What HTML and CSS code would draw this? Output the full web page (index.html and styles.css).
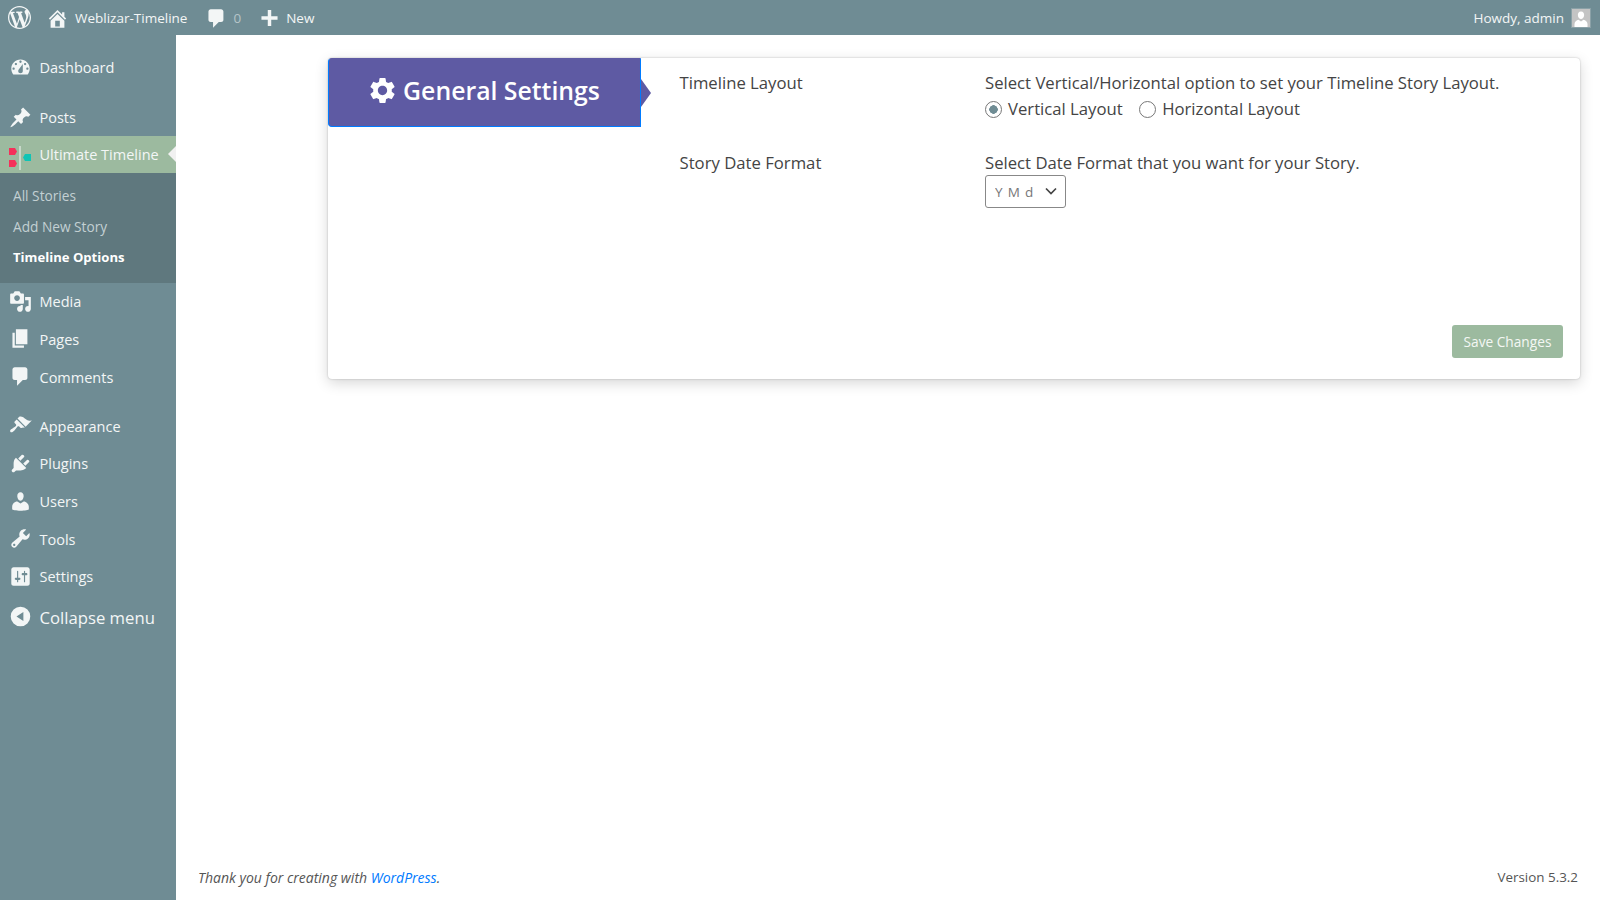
FILE: index.html
```html
<!DOCTYPE html>
<html lang="en">
<head>
    <meta charset="UTF-8" />
    <title>Timeline Options</title>
    <link rel="stylesheet" href="styles.css">
</head>
<body>
    <header class="adminbar">
        <a class="bar-item bar-logo"><svg class="bar-wp" viewBox="0 0 20 20"><path d="M20 10c0-5.51-4.49-10-10-10C4.48 0 0 4.49 0 10c0 5.52 4.48 10 10 10 5.51 0 10-4.48 10-10zM7.78 15.37L4.37 6.22c.55-.02 1.17-.08 1.17-.08.5-.06.44-1.13-.06-1.11 0 0-1.45.11-2.37.11-.18 0-.37 0-.58-.01C4.12 2.69 6.87 1.11 10 1.11c2.33 0 4.45.87 6.05 2.34-.68-.11-1.65.39-1.65 1.58 0 .74.45 1.36.9 2.1.35.61.55 1.36.55 2.46 0 1.49-1.4 5-1.4 5l-3.03-8.37c.54-.02.82-.17.82-.17.5-.05.44-1.25-.06-1.22 0 0-1.44.12-2.38.12-.87 0-2.33-.12-2.33-.12-.5-.03-.56 1.2-.06 1.22l.92.08 1.26 3.41zM17.41 10c.24-.64.74-1.87.43-4.25.7 1.29 1.05 2.71 1.05 4.25 0 3.29-1.73 6.24-4.4 7.78.97-2.59 1.94-5.2 2.92-7.78zM6.1 18.09C3.12 16.65 1.11 13.53 1.11 10c0-1.3.23-2.48.72-3.59C3.25 10.3 4.67 14.2 6.1 18.09zm4.03-6.63l2.58 6.98c-.86.29-1.76.45-2.71.45-.79 0-1.57-.11-2.29-.33.81-2.38 1.62-4.72 2.42-7.1z"/></svg></a>
        <a class="bar-item bar-site"><svg class="bar-icon" viewBox="0 0 20 20"><path d="M16 8.5l1.53 1.53-1.06 1.06L10 4.62l-6.47 6.47-1.06-1.06L10 2.5l4 4v-2h2v4zm-6-2.46l6 5.99V18H4v-5.97zM12 17v-5H8v5h4z"/></svg>Weblizar-Timeline</a>
        <a class="bar-item bar-comments"><svg class="bar-icon" viewBox="0 0 20 20"><path d="M5 2h9c1.1 0 2 .9 2 2v7c0 1.1-.9 2-2 2h-2l-5 5v-5H5c-1.1 0-2-.9-2-2V4c0-1.1.9-2 2-2z"/></svg><span class="bar-count">0</span></a>
        <a class="bar-item bar-new"><svg class="bar-icon" viewBox="0 0 20 20"><path d="M17 8v3h-5.500v5.500h-3V11H3V8h5.500V2.500h3V8z"/></svg>New</a>
        <a class="bar-item bar-user">Howdy, admin<span class="avatar"><svg viewBox="0 0 18 18"><path d="M9 2.500c-2.300 0-3.400 2-3.100 4.100.3 2.100 1.500 3.500 3.100 3.500s2.800-1.400 3.100-3.500C12.400 4.500 11.300 2.500 9 2.500zM6.500 10.800C4.500 11.300 2.500 12.800 2.500 15v3h13v-3c0-2.200-2-3.700-4-4.200L9 12.500z"/></svg></span></a>
    </header>
    <div class="page">
        <aside class="sidebar">
            <ul class="menu">
                <li class="menu-item gap-dash"><svg class="menu-icon" viewBox="0 0 20 20"><path fill-rule="evenodd" d="M3.760 16h12.480c1.100-1.370 1.760-3.110 1.760-5 0-4.420-3.580-8-8-8s-8 3.580-8 8c0 1.890.660 3.630 1.760 5zM10 4c.55 0 1 .45 1 1s-.45 1-1 1-1-.45-1-1 .45-1 1-1zM6 6c.55 0 1 .45 1 1s-.45 1-1 1-1-.45-1-1 .45-1 1-1zm8 0c.55 0 1 .45 1 1s-.45 1-1 1-1-.45-1-1 .45-1 1-1zm-5.370 5.550L12 7v6c0 1.100-.9 2-2 2s-2-.9-2-2c0-.57.240-1.080.63-1.450zM4 10c.55 0 1 .45 1 1s-.45 1-1 1-1-.45-1-1 .45-1 1-1zm12 0c.55 0 1 .45 1 1s-.45 1-1 1-1-.45-1-1 .45-1 1-1z"/></svg>Dashboard</li>
                <li class="menu-item gap-posts"><svg class="menu-icon" viewBox="0 0 20 20"><path d="M10.440 3.020l1.820-1.820 6.360 6.350-1.830 1.820c-1.050-.68-2.480-.57-3.410.36l-.75.75c-.92.93-1.040 2.350-.35 3.410l-1.830 1.820-2.410-2.410-2.800 2.790c-.42.42-3.380 2.710-3.800 2.290s1.860-3.390 2.280-3.810l2.790-2.790L4.100 9.360l1.830-1.820c1.050.69 2.480.57 3.400-.36l.75-.75c.93-.92 1.050-2.350.36-3.410z"/></svg>Posts</li>
                <li class="menu-item menu-current">
                    <svg class="menu-icon" viewBox="0 0 22 24">
                        <polygon points="0,2 6,2 8,5.500 6,9 0,9" fill="#f5305a"/>
                        <polygon points="0,14 6,14 8,17.500 6,21 0,21" fill="#f5305a"/>
                        <rect x="10.500" y="0" width="1" height="24" fill="#f3f6f6"/>
                        <polygon points="16,8 22,8 22,15 16,15 14,11.500" fill="#0fc4b5"/>
                    </svg>
                    Ultimate Timeline
                </li>
                <li class="submenu">
                    <a class="sub-item">All Stories</a>
                    <a class="sub-item">Add New Story</a>
                    <a class="sub-item sub-current">Timeline Options</a>
                </li>
                <li class="menu-item"><svg class="menu-icon" viewBox="0 0 20 20"><path d="M13 11V4c0-.55-.45-1-1-1h-1.670L9 1H5L3.670 3H2c-.55 0-1 .45-1 1v7c0 .55.45 1 1 1h10c.55 0 1-.45 1-1zM7 4.500c1.380 0 2.500 1.120 2.500 2.500S8.380 9.500 7 9.500 4.500 8.380 4.500 7 5.620 4.500 7 4.500zM14 6h5v10.500c0 1.380-1.120 2.500-2.500 2.500S14 17.880 14 16.500s1.120-2.500 2.500-2.500c.17 0 .34.02.5.05V9h-3V6zm-4 8.050V13h2v3.500c0 1.380-1.120 2.500-2.500 2.500S7 17.880 7 16.500 8.120 14 9.500 14c.17 0 .34.02.5.05z"/></svg>Media</li>
                <li class="menu-item"><svg class="menu-icon" viewBox="0 0 20 20"><path d="M6 15V2h10v13H6zm-1 1h8v2H3V5h2v11z"/></svg>Pages</li>
                <li class="menu-item gap-comments"><svg class="menu-icon" viewBox="0 0 20 20"><path d="M5 2h9c1.100 0 2 .9 2 2v7c0 1.100-.9 2-2 2h-2l-5 5v-5H5c-1.100 0-2-.9-2-2V4c0-1.100.9-2 2-2z"/></svg>Comments</li>
                <li class="menu-item"><svg class="menu-icon" viewBox="0 0 20 20"><path d="M14.480 11.060L7.410 3.990l1.500-1.500c.5-.56 2.300-.47 3.510.32 1.210.8 1.430 1.280 2.910 2.100 1.180.64 2.450 1.260 4.450.85zm-.71.71L6.700 4.700 4.930 6.470c-.39.39-.39 1.020 0 1.410l1.060 1.060c.39.39.39 1.030 0 1.420-.6.6-1.430 1.110-2.210 1.690-.35.260-.7.53-1.010.84C1.430 13.230.4 14.670 1.270 15.570c.9.870 2.330-.16 3.660-1.500.31-.31.58-.66.84-1.010.58-.78 1.090-1.610 1.690-2.210.39-.39 1.020-.39 1.410 0l1.060 1.060c.39.39 1.020.39 1.410 0z"/></svg>Appearance</li>
                <li class="menu-item"><svg class="menu-icon" viewBox="0 0 20 20"><path d="M13.110 4.360L9.870 7.600 8 5.730l3.240-3.240c.35-.34 1.050-.2 1.560.32.52.51.66 1.210.31 1.550zm-8 1.770l.91-1.120 9.010 9.010-1.190.84c-.71.71-2.630 1.160-3.820 1.160H6.140L4.900 17.260c-.59.59-1.540.59-2.120 0-.59-.58-.59-1.530 0-2.120l1.240-1.240v-3.880c0-1.130.4-3.190 1.090-3.890zm7.260 3.970l3.240-3.240c.34-.35 1.040-.21 1.550.31.52.51.66 1.210.31 1.550l-3.240 3.250z"/></svg>Plugins</li>
                <li class="menu-item"><svg class="menu-icon" viewBox="0 0 20 20"><path d="M10 9.250c-2.270 0-2.730-3.440-2.730-3.440C7 4.020 7.820 2 9.970 2c2.160 0 2.980 2.020 2.710 3.810 0 0-.41 3.440-2.680 3.440zm0 2.570L12.720 10c2.390 0 4.520 2.330 4.520 4.530v2.490s-3.650 1.130-7.240 1.130c-3.650 0-7.240-1.130-7.240-1.130v-2.490c0-2.250 1.940-4.480 4.470-4.480z"/></svg>Users</li>
                <li class="menu-item"><svg class="menu-icon" viewBox="0 0 20 20"><path d="M16.680 9.770c-1.340 1.340-3.300 1.670-4.950.99l-5.410 6.520c-.99.99-2.590.99-3.580 0s-.99-2.590 0-3.570l6.520-5.420c-.68-1.650-.35-3.610.99-4.950 1.280-1.280 3.120-1.620 4.720-1.060l-2.890 2.890 2.820 2.820 2.860-2.870c.53 1.580.18 3.390-1.080 4.650zM3.810 16.210c.4.39 1.040.39 1.430 0 .4-.4.4-1.040 0-1.430-.39-.4-1.030-.4-1.430 0-.39.39-.39 1.030 0 1.430z"/></svg>Tools</li>
                <li class="menu-item"><svg class="menu-icon" viewBox="0 0 20 20"><path d="M18 16V4c0-1.100-.9-2-2-2H4c-1.100 0-2 .9-2 2v12c0 1.100.9 2 2 2h12c1.100 0 2-.9 2-2zM8 11h1c.55 0 1 .45 1 1s-.45 1-1 1H8v1.500c0 .28-.22.5-.5.5s-.5-.22-.5-.5V13H6c-.55 0-1-.45-1-1s.45-1 1-1h1V5.500c0-.28.22-.5.5-.5s.5.22.5.5V11zm5-2h-1c-.55 0-1-.45-1-1s.45-1 1-1h1V5.500c0-.28.22-.5.5-.5s.5.22.5.5V7h1c.55 0 1 .45 1 1s-.45 1-1 1h-1v5.500c0 .28-.22.5-.5.5s-.5-.22-.5-.5V9z"/></svg>Settings</li>
                <li class="menu-item menu-collapse"><svg class="menu-icon" viewBox="0 0 20 20"><path fill-rule="evenodd" d="M10 1.500a8.500 8.500 0 1 0 0 17 8.500 8.500 0 0 0 0-17zM12.500 6v8L6.500 10z"/></svg>Collapse menu</li>
            </ul>
        </aside>
        <main class="content">
            <section class="card">
                <div class="tabs">
                    <div class="tab-active">
                        <svg class="tab-gear" viewBox="0 0 24 24"><path d="M19.140 12.940c.04-.3.06-.61.06-.94 0-.32-.02-.64-.07-.94l2.030-1.580a.49.49 0 0 0 .12-.61l-1.920-3.320a.488.488 0 0 0-.59-.22l-2.390.96c-.5-.38-1.030-.7-1.620-.94l-.36-2.540a.484.484 0 0 0-.48-.41h-3.840c-.24 0-.43.17-.47.41l-.36 2.540c-.59.24-1.130.57-1.620.94l-2.390-.96c-.22-.08-.47 0-.59.22L2.740 8.870c-.12.21-.08.47.12.61l2.030 1.580c-.05.3-.09.63-.09.94s.02.64.07.94l-2.030 1.580a.49.49 0 0 0-.12.61l1.920 3.320c.12.22.37.29.59.22l2.390-.96c.5.38 1.030.7 1.620.94l.36 2.540c.05.24.24.41.48.41h3.840c.24 0 .44-.17.47-.41l.36-2.540c.59-.24 1.130-.56 1.620-.94l2.390.96c.22.08.47 0 .59-.22l1.920-3.320c.12-.22.07-.47-.12-.61l-2.010-1.580zM12 15.600c-1.980 0-3.600-1.620-3.600-3.600s1.620-3.600 3.600-3.600 3.600 1.620 3.600 3.600-1.620 3.600-3.600 3.600z"/></svg>
                        General Settings
                    </div>
                </div>
                <form class="panel">
                    <div class="row">
                        <div class="row-label">Timeline Layout</div>
                        <div class="row-field">
                            <div>Select Vertical/Horizontal option to set your Timeline Story Layout.</div>
                            <div class="radios">
                                <label class="radio"><input type="radio" name="layout" checked>Vertical Layout</label>
                                <label class="radio"><input type="radio" name="layout">Horizontal Layout</label>
                            </div>
                        </div>
                    </div>
                    <div class="row">
                        <div class="row-label">Story Date Format</div>
                        <div class="row-field">
                            <div>Select Date Format that you want for your Story.</div>
                            <div class="select-wrap">
                                <select class="select"><option>Y M d</option></select>
                                <svg class="select-arrow" viewBox="0 0 12 8"><path d="M1 1.500l5 5 5-5" fill="none" stroke="#444" stroke-width="1.700"/></svg>
                            </div>
                        </div>
                    </div>
                    <div class="actions"><button class="save" type="button">Save Changes</button></div>
                </form>
            </section>
            <footer class="footer">
                <span class="thanks">Thank you for creating with <a class="thanks-link">WordPress</a>.</span>
                <span class="version">Version 5.3.2</span>
            </footer>
        </main>
    </div>
</body>
</html>
```

FILE: styles.css
```css
html {
    font: 14px/1.4 "Open Sans", "Noto Sans", sans-serif;
}

body {
    margin: 0;
    padding: 0;
    background-color: #fff;
    color: #444;
}

/* admin bar */
.adminbar {
    display: flex;
    align-items: center;
    height: 35px;
    padding-top: 1px;
    box-sizing: border-box;
    background-color: #6f8c94;
    color: #f3f6f6;
    font-size: 13.500px;
}

.bar-item {
    display: flex;
    align-items: center;
}

.bar-logo {
    margin-left: 8px;
}

.bar-wp {
    width: 23px;
    height: 23px;
    margin-top: -1px;
    fill: #f3f6f6;
}

.bar-icon {
    width: 23px;
    height: 23px;
    margin-right: 6px;
    fill: #f3f6f6;
}

.bar-site {
    margin-left: 15px;
}

.bar-comments {
    margin-left: 18px;
}

.bar-comments .bar-icon {
    margin-right: 5px;
}

.bar-count {
    color: #b5c4c8;
}

.bar-new {
    margin-left: 17px;
}

.bar-new .bar-icon {
    margin-right: 5px;
}

.bar-user {
    margin-left: auto;
    margin-right: 9px;
}

.avatar {
    display: block;
    width: 18px;
    height: 18px;
    margin-left: 7px;
    background-color: #c4c4c4;
    border: 1px solid #8ba1a7;
}

.avatar svg {
    display: block;
    fill: #fff;
}

/* sidebar */
.page {
    display: flex;
    height: 865px;
}

.sidebar {
    flex: none;
    width: 176px;
    background-color: #6f8c94;
}

.menu {
    margin: 0;
    padding: 13.500px 0 0;
    list-style: none;
}

.menu-item {
    display: flex;
    align-items: center;
    height: 37.700px;
    padding: 1.500px 0 0 39.500px;
    box-sizing: border-box;
    position: relative;
    color: #f3f6f6;
    font-size: 14.500px;
}

.menu-icon {
    position: absolute;
    left: 8.500px;
    top: 7px;
    width: 23px;
    height: 23px;
    fill: #f3f6f6;
}

.gap-dash {
    margin-bottom: 12.500px;
}

.gap-posts {
    height: 37px;
}

.gap-comments {
    margin-bottom: 11.500px;
}

.menu-current {
    height: 37px;
    background-color: #9cba9f;
}

.menu-current .menu-icon {
    left: 9px;
    top: 10px;
    width: 22px;
    height: 24px;
}

.menu-current::after {
    content: "";
    position: absolute;
    right: 0;
    top: 10px;
    border: 8px solid transparent;
    border-left-width: 0;
    border-right-color: #f1f1f1;
}

.submenu {
    display: flex;
    flex-direction: column;
    padding: 7px 0 10px;
    background-color: #5f787e;
}

.sub-item {
    display: block;
    height: 31px;
    padding-left: 13px;
    line-height: 31.500px;
    color: #c3d0d3;
    font-size: 13.700px;
}

.sub-current {
    color: #fff;
    font-size: 13.100px;
    font-weight: 700;
}

.menu-collapse {
    margin-top: 2.500px;
    font-size: 16.700px;
}

/* main content */
.content {
    flex: 1;
    display: flex;
    flex-direction: column;
    min-width: 0;
}

.card {
    display: flex;
    height: 321px;
    margin: 23px 20px 0 152px;
    border-radius: 4px;
    box-shadow: 0 4px 14px rgba(0, 0, 0, 0.16), 0 0 2px rgba(0, 0, 0, 0.25);
    background-color: #fff;
}

.tabs {
    flex: none;
    width: 313px;
}

.tab-active {
    display: flex;
    align-items: center;
    justify-content: center;
    gap: 5px;
    height: 69px;
    padding: 0 2px 4px 0;
    position: relative;
    box-sizing: border-box;
    border: 1px solid #007bff;
    border-top-color: #5e5aa3;
    border-radius: 4px 0 0 4px;
    background-color: #5e5aa3;
    color: #fff;
    font-size: 24.800px;
    font-weight: 600;
}

.tab-active::after {
    content: "";
    position: absolute;
    left: 100%;
    top: 20px;
    margin-left: 1px;
    border: 14px solid transparent;
    border-right-width: 0;
    border-left: 10px solid #5e5aa3;
}

.tab-gear {
    width: 31px;
    height: 31px;
    fill: #fff;
}

.panel {
    flex: 1;
    display: flex;
    flex-direction: column;
    padding: 12px 17px 21px 38.500px;
    font-size: 16.700px;
    line-height: 26px;
}

.row {
    display: flex;
    margin-bottom: 28px;
}

.row-label {
    flex: none;
    width: 305.500px;
}

.radios {
    display: flex;
    gap: 16.500px;
}

.radio {
    display: flex;
    align-items: center;
    gap: 6px;
}

.radio input {
    appearance: none;
    width: 17px;
    height: 17px;
    margin: 0;
    border: 1px solid #777;
    border-radius: 50%;
    background-color: #fff;
}

.radio input:checked {
    background: radial-gradient(circle, #6f8c94 0 4px, #fff 4.500px);
}

.select-wrap {
    position: relative;
    width: 81px;
    height: 33px;
    margin-top: -1px;
}

.select {
    appearance: none;
    display: block;
    width: 100%;
    height: 100%;
    padding: 0 0 0 9px;
    border: 1px solid #888;
    border-radius: 3px;
    background-color: #fff;
    color: #777;
    font: 13.500px "Open Sans", sans-serif;
    letter-spacing: 0.800px;
}

.select-arrow {
    position: absolute;
    right: 9px;
    top: 12px;
    width: 12px;
    height: 8px;
}

.actions {
    display: flex;
    justify-content: flex-end;
    margin-top: auto;
}

.save {
    width: 111px;
    height: 33px;
    padding: 0;
    border: 0;
    border-radius: 3px;
    background-color: #9cba9f;
    color: #f4f7f4;
    font: 13.700px "Open Sans", sans-serif;
}

.footer {
    display: flex;
    justify-content: space-between;
    margin-top: auto;
    padding: 0 22px 12px;
    color: #555;
}

.thanks {
    font-size: 14px;
    font-style: italic;
}

.thanks-link {
    color: #007bff;
}

.version {
    font-size: 13.400px;
}
```
